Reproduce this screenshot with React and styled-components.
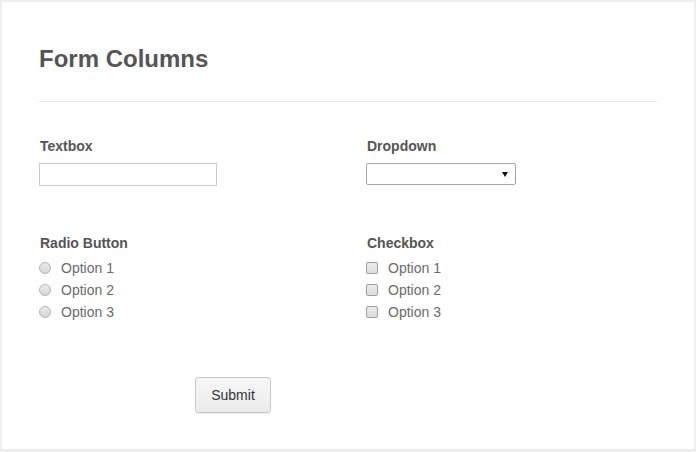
import styled, { createGlobalStyle } from "styled-components";

const GlobalStyle = createGlobalStyle`
  html, body {
    margin: 0;
    padding: 0;
    background: #eeeeee;
    font-family: "Liberation Sans", Arial, sans-serif;
  }
`;

const Panel = styled.div`
  margin: 2px 2px 3px 2px;
  height: 447px;
  box-sizing: border-box;
  background: #ffffff;
  padding: 43px 37px 0 37px;
`;

const Title = styled.h1`
  margin: 0;
  font-size: 24px;
  line-height: 28px;
  font-weight: bold;
  color: #555555;
`;

const Divider = styled.hr`
  margin: 28px 0 0 0;
  border: 0;
  border-top: 1px solid #e6e6e6;
  height: 0;
`;

const Grid = styled.div`
  display: grid;
  grid-template-columns: 327px 1fr;
  row-gap: 49px;
  margin-top: 36px;
`;

const Field = styled.div`
  display: flex;
  flex-direction: column;
  align-items: flex-start;
`;

const Label = styled.div`
  font-size: 14px;
  line-height: 17px;
  font-weight: bold;
  color: #555555;
  padding-left: 1px;
`;

const TextInput = styled.input`
  margin-top: 8px;
  width: 178px;
  height: 23px;
  box-sizing: border-box;
  border: 1px solid #cccccc;
  padding: 0 4px;
  outline: none;
`;

const Select = styled.div`
  position: relative;
  margin-top: 8px;
  width: 150px;
  height: 22px;
  box-sizing: border-box;
  border: 1px solid #a6a6a6;
  border-radius: 2px;
  background: #ffffff;
`;

const Arrow = styled.span`
  position: absolute;
  right: 7px;
  top: 8px;
  width: 0;
  height: 0;
  border-left: 3px solid transparent;
  border-right: 3px solid transparent;
  border-top: 5px solid #111111;
`;

const Options = styled.div`
  margin-top: 5px;
  display: flex;
  flex-direction: column;
`;

const Option = styled.label`
  display: flex;
  align-items: center;
  height: 22px;
  font-size: 14px;
  color: #6b6b6b;
`;

const Mark = styled.span`
  width: 12px;
  height: 12px;
  box-sizing: border-box;
  border: 1px solid ${({ $round }) => ($round ? "#b4b4b4" : "#a0a0a0")};
  border-radius: ${({ $round }) => ($round ? "50%" : "2px")};
  background: ${({ $round }) =>
    $round ? "linear-gradient(#eaeaea, #d6d6d6)" : "linear-gradient(#ececec, #dcdcdc)"};
  margin-right: 10px;
  flex-shrink: 0;
`;

const Footer = styled.div`
  margin-top: 54px;
  padding-left: 156px;
`;

const Button = styled.button`
  width: 76px;
  height: 36px;
  font-family: "Liberation Sans", Arial, sans-serif;
  font-size: 14px;
  color: #333333;
  background: linear-gradient(#f6f6f6, #ebebeb);
  border: 1px solid #c9c9c9;
  border-radius: 3px;
  box-shadow: 0 1px 1px rgba(0, 0, 0, 0.08);
  cursor: pointer;
`;

const OptionList = ({ round }) => (
  <Options>
    {["Option 1", "Option 2", "Option 3"].map((o) => (
      <Option key={o}>
        <Mark $round={round} />
        {o}
      </Option>
    ))}
  </Options>
);

export default function App() {
  return (
    <>
      <GlobalStyle />
      <Panel>
        <Title>Form Columns</Title>
        <Divider />
        <Grid>
          <Field>
            <Label>Textbox</Label>
            <TextInput type="text" />
          </Field>
          <Field>
            <Label>Dropdown</Label>
            <Select>
              <Arrow />
            </Select>
          </Field>
          <Field>
            <Label>Radio Button</Label>
            <OptionList round />
          </Field>
          <Field>
            <Label>Checkbox</Label>
            <OptionList />
          </Field>
        </Grid>
        <Footer>
          <Button>Submit</Button>
        </Footer>
      </Panel>
    </>
  );
}
